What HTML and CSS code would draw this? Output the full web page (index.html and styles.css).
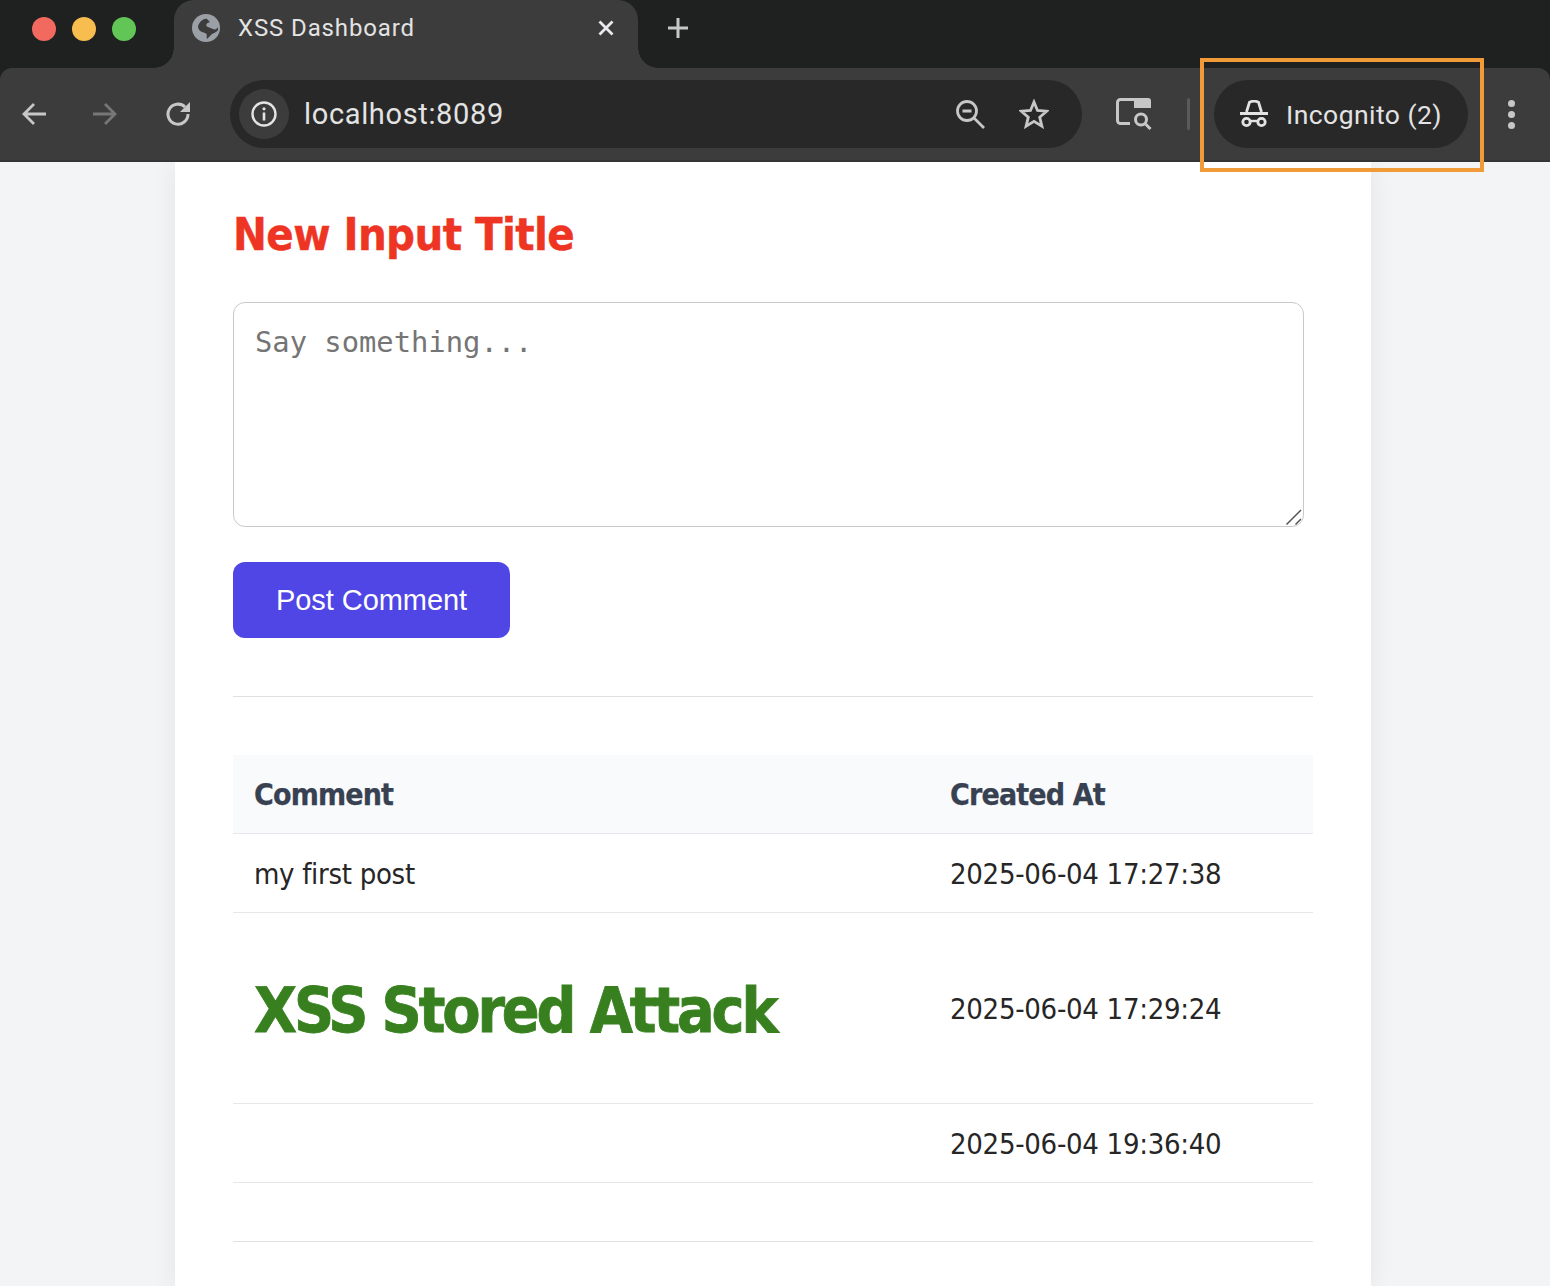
FILE: index.html
```html
<!DOCTYPE html>
<html lang="en">
<head>
<meta charset="utf-8">
<title>XSS Dashboard</title>
<link rel="stylesheet" href="styles.css">
</head>
<body>
<header class="browser">
  <div class="tabstrip">
    <div class="lights"><span class="light red"></span><span class="light yellow"></span><span class="light green"></span></div>
    <div class="tab">
      <svg class="favicon" viewBox="0 0 28 28"><circle cx="14" cy="14" r="14" fill="#9aa0a6"/><path d="M6 12C8 7 12 4 15 5l3 3c-4 1-5 4-2 5l5 2c2 1 4 0 5-2l0 3c-2 3-5 3-7 5l-4 4c-1-3 1-5-2-6-4-1-7-3-7-7z" fill="#3c3c3c"/></svg>
      <span class="tab-title">XSS Dashboard</span>
      <svg class="tab-close" viewBox="0 0 16 16"><path d="M1.500 1.500l13 13M14.500 1.500l-13 13" stroke="#e8eaed" stroke-width="2.800" fill="none"/></svg>
    </div>
    <svg class="new-tab" viewBox="0 0 22 22"><path d="M11 1v20M1 11h20" stroke="#c7c7c7" stroke-width="3" fill="none"/></svg>
  </div>
  <div class="toolbar">
    <svg class="nav back" viewBox="0 0 28 28"><path d="M26 14H4M14 4L4 14l10 10" stroke="#c7c7c7" stroke-width="2.800" fill="none"/></svg>
    <svg class="nav forward" viewBox="0 0 28 28"><path d="M2 14h22M14 4l10 10-10 10" stroke="#777" stroke-width="2.800" fill="none"/></svg>
    <svg class="nav reload" viewBox="0 0 28 28"><path d="M24 14a10 10 0 1 1-3-7" stroke="#c7c7c7" stroke-width="3" fill="none"/><path d="M26 2v10H16z" fill="#c7c7c7"/></svg>
    <div class="omnibox">
      <span class="site-info"><svg viewBox="0 0 28 28"><circle cx="14" cy="14" r="11.500" stroke="#e3e3e3" stroke-width="2.400" fill="none"/><path d="M14 12.500v8" stroke="#e3e3e3" stroke-width="2.600"/><circle cx="14" cy="8.800" r="1.600" fill="#e3e3e3"/></svg></span>
      <span class="url">localhost:8089</span>
      <svg class="omni-zoom" viewBox="0 0 30 30"><circle cx="12" cy="12" r="9.500" stroke="#c7c7c7" stroke-width="2.800" fill="none"/><path d="M7.500 12h9M19 19l10 10" stroke="#c7c7c7" stroke-width="2.800" fill="none"/></svg>
      <svg class="omni-star" viewBox="0 0 30 30"><path d="M15 3l3.500 8.500 9.200.7-7 6 2.200 9L15 22.400 7.100 27.200l2.200-9-7-6 9.200-.7z" stroke="#c7c7c7" stroke-width="2.800" fill="none" stroke-linejoin="miter"/></svg>
    </div>
    <svg class="lens" viewBox="0 0 36 32"><path d="M14 25.500H4.500a3 3 0 0 1-3-3V4.500a3 3 0 0 1 3-3H20" stroke="#c7c7c7" stroke-width="3" fill="none"/><path d="M18 0h14a3 3 0 0 1 3 3v7H18z" fill="#c7c7c7"/><circle cx="25" cy="21.500" r="5.500" stroke="#c7c7c7" stroke-width="3" fill="none"/><path d="M29 25.500l5.500 5.500" stroke="#c7c7c7" stroke-width="3"/></svg>
    <span class="divider"></span>
    <div class="incognito">
      <svg class="incog-icon" viewBox="0 0 28 28"><path d="M6.500 12L9.500 2.200C12 1 16 1 18.500 2.200L21.500 12M0 13.500h28" stroke="#e3e3e3" stroke-width="2.800" fill="none"/><circle cx="6.500" cy="22" r="3.700" stroke="#e3e3e3" stroke-width="2.800" fill="none"/><circle cx="21.500" cy="22" r="3.700" stroke="#e3e3e3" stroke-width="2.800" fill="none"/><path d="M10 21h8" stroke="#e3e3e3" stroke-width="2.400"/></svg>
      <span class="incog-label">Incognito (2)</span>
    </div>
    <div class="kebab"><i></i><i></i><i></i></div>
  </div>
  <div class="highlight"></div>
</header>
<main class="card">
  <h1 class="title">New Input Title</h1>
  <form class="post-form">
    <div class="box-wrap">
      <textarea class="comment-box" placeholder="Say something..."></textarea>
      <svg class="grip" viewBox="0 0 18 18"><path d="M1.500 16.500L16 2M10.500 16.500L16 11" stroke="#555" stroke-width="1.500" fill="none"/></svg>
    </div>
    <button class="post-btn" type="button">Post Comment</button>
  </form>
  <hr class="rule">
  <table class="comments">
    <thead>
      <tr><th class="col-comment">Comment</th><th class="col-date">Created At</th></tr>
    </thead>
    <tbody>
      <tr><td>my first post</td><td>2025-06-04 17:27:38</td></tr>
      <tr><td><h1 class="stored">XSS Stored Attack</h1></td><td>2025-06-04 17:29:24</td></tr>
      <tr><td></td><td>2025-06-04 19:36:40</td></tr>
    </tbody>
  </table>
  <hr class="rule">
</main>
</body>
</html>
```

FILE: styles.css
```css
* { box-sizing: border-box; }
html, body { margin: 0; padding: 0; }
body {
  height: 1286px;
  overflow: hidden;
  background: #f3f4f6;
  font-family: "DejaVu Sans Condensed", "DejaVu Sans", sans-serif;
  font-stretch: condensed;
}
.browser { position: relative; height: 162px; background: #1f2120; font-family: "Roboto", "Liberation Sans", sans-serif; font-stretch: normal; }
.tabstrip { height: 68px; display: flex; align-items: flex-start; position: relative; }
.lights { display: flex; gap: 16px; padding: 17px 0 0 32px; width: 174px; }
.light { width: 24px; height: 24px; border-radius: 50%; }
.red { background: #f26a5f; }
.yellow { background: #f7bd4f; }
.green { background: #61c655; }
.tab {
  width: 464px; height: 68px; background: #3c3c3c;
  border-radius: 20px 20px 0 0;
  display: flex; align-items: center;
  padding: 0 24px 12px 18px;
  position: relative;
}
.tab::before, .tab::after {
  content: ""; position: absolute; bottom: 0; width: 20px; height: 20px;
}
.tab::before { left: -20px; background: radial-gradient(circle at 0 0, #1f2120 19.500px, #3c3c3c 20px); }
.tab::after { right: -20px; background: radial-gradient(circle at 100% 0, #1f2120 19.500px, #3c3c3c 20px); }
.favicon { width: 28px; height: 28px; flex: none; }
.tab-title { margin-left: 18px; font-size: 24px; color: #e3e3e3; flex: 1; letter-spacing: .88px; }
.tab-close { width: 16px; height: 16px; flex: none; }
.new-tab { width: 22px; height: 22px; margin: 17px 0 0 29px; position: relative; }
.toolbar {
  height: 94px; background: #3c3c3c;
  border-top-left-radius: 12px; border-top-right-radius: 12px;
  border-bottom: 2px solid #353535;
  display: flex; align-items: center;
  padding: 0 0 0 20px;
}
.nav { width: 28px; height: 28px; flex: none; }
.forward { margin-left: 43px; }
.reload { margin-left: 45px; }
.omnibox {
  margin-left: 38px; width: 852px; height: 68px; border-radius: 34px;
  background: #282828; display: flex; align-items: center; padding: 0 33px 0 9px;
}
.site-info { width: 50px; height: 50px; border-radius: 50%; background: #3c3c3c; display: flex; align-items: center; justify-content: center; flex: none; }
.site-info svg { width: 28px; height: 28px; }
.url { margin-left: 15px; font-size: 29px; color: #e3e3e3; flex: 1; letter-spacing: .65px; }
.omni-zoom { width: 30px; height: 30px; flex: none; }
.omni-star { width: 30px; height: 30px; flex: none; margin-left: 34px; }
.lens { width: 36px; height: 32px; flex: none; margin-left: 34px; }
.divider { width: 3px; height: 32px; border-radius: 2px; background: #5a5a5a; margin-left: 35px; flex: none; }
.incognito {
  margin-left: 24px; width: 254px; height: 68px; border-radius: 34px; background: #282828;
  display: flex; align-items: center; padding-left: 26px; flex: none;
}
.incog-icon { width: 28px; height: 28px; flex: none; }
.incog-label { margin-left: 18px; font-size: 26.500px; line-height: 32px; padding-top: 2px; color: #e3e3e3; letter-spacing: .45px; }
.kebab { margin-left: 40px; display: flex; flex-direction: column; gap: 4px; flex: none; }
.kebab i { width: 7px; height: 7px; border-radius: 50%; background: #c7c7c7; display: block; }
.highlight { position: absolute; left: 1200px; top: 58px; width: 284px; height: 114px; border: 4px solid #f19a38; z-index: 2; }

.card {
  width: 1196px; height: 1124px; margin-left: 175px; background: #fff;
  padding: 0 58px;
  box-shadow: 0 4px 24px rgba(0,0,0,.07);
}
.title { margin: 0; padding-top: 48px; font-size: 45px; line-height: 50px; letter-spacing: -.6px; color: #ee3524; font-weight: 700; -webkit-text-stroke: .4px #ee3524; }
.post-form { margin-top: 42px; }
.box-wrap { position: relative; width: 1071px; height: 225px; }
.comment-box {
  display: block; width: 100%; height: 100%; border: 1px solid #c9c9c9; border-radius: 12px;
  padding: 21px; font-family: "DejaVu Sans Mono", monospace; font-size: 28.800px; line-height: 36px; color: #333; resize: none; outline: none; font-stretch: normal;
}
.comment-box::placeholder { color: #757575; }
.grip { position: absolute; right: 1px; bottom: 1px; width: 18px; height: 18px; }
.post-btn {
  display: block; margin-top: 35px; width: 277px; height: 76px; border: 0; border-radius: 12px;
  background: #4f46e5; color: #fff; font-family: "Liberation Sans", Arial, sans-serif; font-size: 29px; letter-spacing: -.05px; font-stretch: normal;
}
.rule { margin: 0; border: 0; border-top: 1px solid #e0e0e0; }
.post-form + .rule { margin-top: 58px; }
.comments { width: 1080px; border-collapse: collapse; table-layout: fixed; margin: 58px 0; }
.col-comment { width: 696px; }
.comments th, .comments td { padding: 0 22px 0 21px; border-bottom: 1px solid #e5e7eb; text-align: left; }
.comments th { height: 78px; padding-top: 2px; background: #f9fafb; color: #374151; font-weight: 700; font-size: 30px; letter-spacing: -.85px; -webkit-text-stroke: .25px #374151; }
.comments td { height: 79px; color: #262626; font-size: 29px; letter-spacing: -.3px; padding-top: 3px; }
.stored { margin: 0; padding: 41px 0 38px; font-size: 62px; line-height: 108px; letter-spacing: -3.100px; color: #38801f; font-weight: 700; white-space: nowrap; -webkit-text-stroke: .8px #38801f; }
```
